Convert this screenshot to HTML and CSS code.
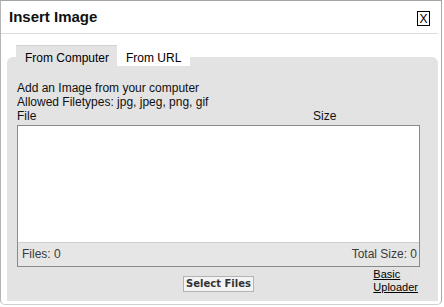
FILE: index.html
```html
<!DOCTYPE html>
<html>
<head>
<meta charset="utf-8">
<link rel="stylesheet" href="styles.css">
</head>
<body>
<div class="dialog">
  <div class="titlebar">
    <span class="title">Insert Image</span>
    <span class="close">X</span>
  </div>
  <div class="body">
    <div class="tabs">
      <div class="tab active">From Computer</div>
      <div class="tab">From URL</div>
    </div>
    <div class="panel">
      <div class="line">Add an Image from your computer</div>
      <div class="line">Allowed Filetypes: jpg, jpeg, png, gif</div>
      <div class="cols">
        <span class="col-file">File</span>
        <span class="col-size">Size</span>
      </div>
      <div class="filebox">
        <div class="filelist"></div>
        <div class="filefoot">
          <span>Files: 0</span>
          <span>Total Size: 0</span>
        </div>
      </div>
      <div class="actions">
        <span></span>
        <button class="select">Select Files</button>
        <a class="basic" href="#">Basic<br>Uploader</a>
      </div>
    </div>
  </div>
</div>
</body>
</html>
```
FILE: styles.css
```css
html, body {
  margin: 0;
  padding: 0;
  background: #ffffff;
}
body {
  font-family: "Liberation Sans", Arial, sans-serif;
  font-size: 12px;
  color: #111;
}
.dialog {
  width: 440px;
  height: 303px;
  border: 1px solid #a3a3a3;
  border-bottom-color: #cfcfcf;
  border-left-color: #b5b5b5;
  border-right-color: #a8a8a8;
  border-radius: 0 0 5px 5px;
  background: #fff;
  display: flex;
  flex-direction: column;
}
.titlebar {
  height: 33px;
  margin-right: 3px;
  border-bottom: 1px solid #dcdcdc;
  display: flex;
  align-items: center;
  justify-content: space-between;
  padding: 0 8px 0 8px;
}
.title {
  font-weight: bold;
  font-size: 15px;
  line-height: 18px;
  color: #111;
}
.close {
  width: 11px;
  height: 13px;
  border: 1px solid #000;
  font-size: 12px;
  line-height: 14px;
  text-align: center;
  color: #000;
  margin-top: 3px;
}
.body {
  padding: 11px 3px 3px 6px;
  display: flex;
  flex-direction: column;
}
.tabs {
  display: flex;
  padding-left: 9px;
  margin-bottom: -10px;
  position: relative;
  z-index: 1;
}
.tab {
  height: 15px;
  padding: 5px 9px 0 9px;
  line-height: 14px;
  border-top: 1px solid transparent;
  background: #fff;
  color: #000;
}
.tab.active {
  background: #e3e3e3;
  border-top-color: #d2d2d2;
  padding: 5px 8px 0 9px;
  height: 16px;
}
.panel {
  height: 244px;
  box-sizing: border-box;
  background: #e3e3e3;
  border-radius: 6px 6px 0 0;
  padding: 24px 18px 0 10px;
  display: flex;
  flex-direction: column;
}
.line {
  line-height: 14px;
}
.cols {
  display: flex;
  line-height: 14px;
  margin-bottom: 2px;
}
.col-file {
  flex: 1;
}
.col-size {
  width: 107px;
}
.filebox {
  border: 1px solid #8a8a8a;
  display: flex;
  flex-direction: column;
}
.filelist {
  height: 116px;
  background: #fff;
}
.filefoot {
  height: 19px;
  padding: 4px 2px 0 4px;
  border-top: 1px solid #cfcfcf;
  background: #e6e6e6;
  display: flex;
  justify-content: space-between;
  line-height: 14px;
  color: #3a3a3a;
}
.actions {
  display: grid;
  grid-template-columns: 1fr auto 1fr;
  align-items: start;
}
.select {
  margin-top: 9px;
  font-family: "DejaVu Sans", Verdana, sans-serif;
  font-weight: bold;
  font-size: 10px;
  line-height: 14px;
  height: 16px;
  padding: 0 2px;
  background: #f3f3f3;
  border: 1px solid #b3b3b3;
  color: #333;
  border-radius: 0;
}
.basic {
  justify-self: end;
  margin-right: 2px;
  margin-top: 1px;
  font-size: 11px;
  line-height: 13px;
  color: #000;
  text-decoration: underline;
}
```
